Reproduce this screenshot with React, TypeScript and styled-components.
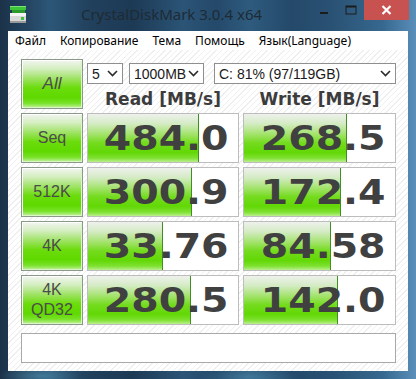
import React from "react";
import styled, { createGlobalStyle } from "styled-components";

const GlobalStyle = createGlobalStyle`
  html, body { margin: 0; padding: 0; width: 416px; height: 379px; overflow: hidden; }
  body { font-family: "Liberation Sans", Arial, sans-serif; }
`;

const Window = styled.div`
  width: 416px;
  height: 379px;
  display: flex;
  flex-direction: column;
  background:
    radial-gradient(ellipse 40px 10px at 40px 376px, rgba(90,160,190,0.5), transparent),
    radial-gradient(ellipse 50px 10px at 250px 377px, rgba(90,160,190,0.4), transparent),
    linear-gradient(90deg, #1b3249 0%, #23435f 6%, #2c5677 12%, #21405c 22%, #1d3a55 32%, #2b5476 44%, #24496a 52%, #2e5b7e 60%, #24496a 70%, #2a5274 80%, #36688f 92%, #5a8fba 100%);
`;

const TitleBar = styled.div`
  height: 31px;
  display: flex;
  align-items: flex-start;
`;

const AppIcon = styled.svg`
  margin: 6px 0 0 10px;
  flex: none;
`;

const Title = styled.div`
  flex: 1;
  text-align: center;
  padding-left: 6px;
  margin-top: 4px;
  font-family: "Noto Sans", "Open Sans", sans-serif;
  font-size: 15px;
  line-height: 20px;
  color: #1e2b35;
`;

const Captions = styled.div`
  display: flex;
  margin-right: 7px;
`;

const CaptionButton = styled.div<{ $close?: boolean }>`
  width: ${(p) => (p.$close ? "45px" : "27px")};
  height: 20px;
  display: flex;
  align-items: center;
  justify-content: center;
  background: ${(p) => (p.$close ? "#c75250" : "transparent")};
`;

const Client = styled.div`
  margin: 0 8px 8px;
  flex: 1;
  background: #ffffff;
  display: flex;
  flex-direction: column;
`;

const MenuBar = styled.div`
  height: 19px;
  display: flex;
  align-items: center;
  font-family: "Noto Sans", "Open Sans", sans-serif;
  font-size: 12px;
  color: #000;
`;

const MenuItem = styled.span`
  padding: 0 7px;
  line-height: 19px;
`;

const Content = styled.div`
  flex: 1;
  padding: 9px 12px 0 13px;
  display: flex;
  flex-direction: column;
  background: repeating-linear-gradient(135deg, #ffffff 0px, #ffffff 3px, #efefef 3px, #efefef 4px);
`;

const Grid = styled.div`
  display: grid;
  grid-template-columns: 62px 152px 153px;
  grid-auto-rows: 50px;
  column-gap: 4px;
  row-gap: 4px;
`;

const LabelButton = styled.div<{ $italic?: boolean }>`
  box-sizing: border-box;
  border: 1px solid #8a998a;
  box-shadow: inset 1px 1px 0 #ffffff, inset -1px -1px 0 #d9f6c4;
  background: linear-gradient(to bottom, #f3f5f1 0%, #d5eec2 18%, #9be25e 40%, #6bdc0c 58%, #5fd900 78%, #78e228 90%, #c6f2a4 100%);
  display: flex;
  flex-direction: column;
  align-items: center;
  justify-content: center;
  font-family: "Liberation Sans", Arial, sans-serif;
  font-size: ${(p) => (p.$italic ? "17px" : "16px")};
  font-style: ${(p) => (p.$italic ? "italic" : "normal")};
  line-height: 20px;
  color: #4b4b4b;
`;

const TopControls = styled.div`
  grid-column: 2 / 4;
  display: flex;
  flex-direction: column;
`;

const SelectRow = styled.div`
  margin-top: 4px;
  display: flex;
  height: 21px;
`;

const Select = styled.div<{ $w: number; $gap: number }>`
  box-sizing: border-box;
  width: ${(p) => p.$w}px;
  margin-right: ${(p) => p.$gap}px;
  height: 21px;
  border: 1px solid #8e8f8f;
  background: #ffffff;
  display: flex;
  align-items: center;
  justify-content: space-between;
  padding: 0 4px 0 4px;
  font-family: "Liberation Sans", Arial, sans-serif;
  font-size: 14px;
  color: #1a1a1a;
`;

const Headers = styled.div`
  flex: 1;
  display: grid;
  grid-template-columns: 152px 153px;
  column-gap: 4px;
  align-items: end;
`;

const Header = styled.div`
  text-align: center;
  font-family: "DejaVu Sans", Verdana, sans-serif;
  font-weight: bold;
  font-size: 17px;
  line-height: 20px;
  color: #3c3c3c;
`;

const ValueCell = styled.div`
  box-sizing: border-box;
  position: relative;
  border: 1px solid #bdbdbd;
  background: #ffffff;
  display: flex;
  align-items: center;
  justify-content: flex-end;
  padding-right: 9px;
  overflow: hidden;
`;

const Bar = styled.div`
  position: absolute;
  left: 0;
  top: 0;
  bottom: 0;
  border-right: 1px solid #3f8f22;
  background: linear-gradient(to bottom, #eef1ec 0%, #d4ebc4 20%, #a3e36c 42%, #74db1e 60%, #62d806 80%, #7fe132 92%, #bcf08e 100%);
`;

const Value = styled.span`
  position: relative;
  display: inline-block;
  font-family: "DejaVu Sans", Verdana, sans-serif;
  font-weight: bold;
  font-size: 34px;
  line-height: 34px;
  color: #404040;
  transform: scaleX(1.16);
  transform-origin: right center;
`;

const Comment = styled.div`
  box-sizing: border-box;
  margin-top: 8px;
  width: 375px;
  height: 30px;
  border: 1px solid #a9a9a9;
  background: #ffffff;
`;

const Chevron = () => (
  <svg width="11" height="7" viewBox="0 0 11 7">
    <path d="M1 1 L5.5 5.5 L10 1" fill="none" stroke="#2a2a2a" strokeWidth="1.6" />
  </svg>
);

type Row = { label: string[]; read: string; rw: number; write: string; ww: number };

const rows: Row[] = [
  { label: ["Seq"], read: "484.0", rw: 110, write: "268.5", ww: 102 },
  { label: ["512K"], read: "300.9", rw: 103, write: "172.4", ww: 96 },
  { label: ["4K"], read: "33.76", rw: 74, write: "84.58", ww: 86 },
  { label: ["4K", "QD32"], read: "280.5", rw: 102, write: "142.0", ww: 93 },
];

export default function App() {
  return (
    <>
      <GlobalStyle />
      <Window>
        <TitleBar>
          <AppIcon width="17" height="18" viewBox="0 0 17 18">
            <rect x="0" y="0" width="16" height="4" fill="#3cc43a" />
            <rect x="0" y="0" width="16" height="1" fill="#7ee07a" />
            <rect x="2" y="4" width="13" height="3" fill="#2a9a2a" />
            <rect x="0" y="7" width="16" height="10" rx="1" fill="#d8d8d8" />
            <rect x="0" y="7" width="16" height="3" fill="#f4f4f4" />
            <rect x="0" y="15" width="16" height="2" fill="#9a9a9a" />
            <rect x="11" y="11" width="3" height="3" fill="#3cc43a" />
          </AppIcon>
          <Title>CrystalDiskMark 3.0.4 x64</Title>
          <Captions>
            <CaptionButton>
              <svg width="10" height="10" viewBox="0 0 10 10">
                <rect x="1" y="7" width="8" height="2" fill="#1c1c1c" />
              </svg>
            </CaptionButton>
            <CaptionButton>
              <svg width="12" height="10" viewBox="0 0 12 10">
                <rect x="1" y="1" width="10" height="8" fill="none" stroke="#1c1c1c" strokeWidth="1" />
                <rect x="1" y="1" width="10" height="1.5" fill="#1c1c1c" />
              </svg>
            </CaptionButton>
            <CaptionButton $close>
              <svg width="11" height="10" viewBox="0 0 11 10">
                <path d="M1.5 1 L9.5 9 M9.5 1 L1.5 9" stroke="#ffffff" strokeWidth="2.2" />
              </svg>
            </CaptionButton>
          </Captions>
        </TitleBar>
        <Client>
          <MenuBar>
            <MenuItem>Файл</MenuItem>
            <MenuItem>Копирование</MenuItem>
            <MenuItem>Тема</MenuItem>
            <MenuItem>Помощь</MenuItem>
            <MenuItem>Язык(Language)</MenuItem>
          </MenuBar>
          <Content>
            <Grid>
              <LabelButton $italic>All</LabelButton>
              <TopControls>
                <SelectRow>
                  <Select $w={36} $gap={6}>
                    <span>5</span>
                    <Chevron />
                  </Select>
                  <Select $w={75} $gap={10}>
                    <span>1000MB</span>
                    <Chevron />
                  </Select>
                  <Select $w={182} $gap={0}>
                    <span>C: 81% (97/119GB)</span>
                    <Chevron />
                  </Select>
                </SelectRow>
                <Headers>
                  <Header>Read [MB/s]</Header>
                  <Header>Write [MB/s]</Header>
                </Headers>
              </TopControls>
              {rows.map((r) => (
                <React.Fragment key={r.label.join(" ")}>
                  <LabelButton>
                    {r.label.map((l) => (
                      <span key={l}>{l}</span>
                    ))}
                  </LabelButton>
                  <ValueCell>
                    <Bar style={{ width: r.rw }} />
                    <Value>{r.read}</Value>
                  </ValueCell>
                  <ValueCell>
                    <Bar style={{ width: r.ww }} />
                    <Value>{r.write}</Value>
                  </ValueCell>
                </React.Fragment>
              ))}
            </Grid>
            <Comment />
          </Content>
        </Client>
      </Window>
    </>
  );
}
